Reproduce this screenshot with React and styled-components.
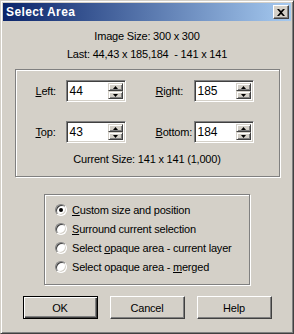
import styled, { createGlobalStyle } from 'styled-components';

const GlobalStyle = createGlobalStyle`
	html, body {
		margin: 0;
		padding: 0;
		background: #d4d0c8;
	}
	* {
		box-sizing: border-box;
	}
`;

const Window = styled.div`
	width: 294px;
	height: 334px;
	padding: 2px;
	display: flex;
	flex-direction: column;
	background: #d4d0c8;
	border: 1px solid;
	border-color: #d4d0c8 #404040 #404040 #d4d0c8;
	box-shadow: inset 1px 1px #fff, inset -1px -1px #808080;
	font-family: "Liberation Sans", Arial, sans-serif;
	font-size: 11px;
	letter-spacing: -0.2px;
	color: #000;
`;

const TitleBar = styled.div`
	height: 18px;
	display: flex;
	align-items: center;
	justify-content: space-between;
	padding: 0 2px 0 3px;
	background: linear-gradient(90deg, #0a246a, #a6caf0);
`;

const Title = styled.span`
	color: #fff;
	font-weight: bold;
	font-size: 12px;
	letter-spacing: 0.4px;
`;

const CloseButton = styled.button`
	width: 16px;
	height: 14px;
	padding: 0;
	display: flex;
	align-items: center;
	justify-content: center;
	background: #d4d0c8;
	border: 1px solid;
	border-color: #fff #404040 #404040 #fff;
	box-shadow: inset -1px -1px #808080;
`;

const Body = styled.div`
	flex: 1;
	display: flex;
	flex-direction: column;
	align-items: center;
	padding-top: 9px;
`;

const InfoLine = styled.div`
	line-height: 13px;
	margin-top: ${p => p.$gap || 0}px;
`;

const GroupBox = styled.div`
	width: ${p => p.$width}px;
	margin-top: ${p => p.$top}px;
	border: 1px solid #808080;
	box-shadow: inset 1px 1px #fff, 1px 1px #fff;
`;

const FieldGrid = styled.div`
	display: grid;
	grid-template-columns: 30px 60px 30px 38px 60px;
	row-gap: 19px;
	align-items: center;
	padding: 10px 0 0 20px;
`;

const Label = styled.label`
	line-height: 13px;
	white-space: nowrap;
`;

const Key = styled.span`
	text-decoration: underline;
	text-underline-offset: 1px;
`;

const SpinBox = styled.div`
	height: 22px;
	display: flex;
	border: 1px solid;
	border-color: #808080 #fff #fff #808080;
	box-shadow: inset 1px 1px #404040, inset -1px -1px #d4d0c8;
	padding: 2px;
	background: #fff;
`;

const SpinText = styled.span`
	flex: 1;
	font-size: 12px;
	line-height: 16px;
	padding-left: 1px;
	letter-spacing: 0;
`;

const SpinButtons = styled.div`
	width: 15px;
	display: flex;
	flex-direction: column;
`;

const SpinHalf = styled.div`
	flex: 1;
	display: flex;
	align-items: center;
	justify-content: center;
	background: #d4d0c8;
	border: 1px solid;
	border-color: #d4d0c8 #404040 #404040 #d4d0c8;
	box-shadow: inset 1px 1px #fff, inset -1px -1px #808080;
`;

const CurrentSize = styled.div`
	text-align: center;
	line-height: 13px;
	margin: 10px 0 10px;
`;

const RadioList = styled.div`
	display: flex;
	flex-direction: column;
	padding: 5px 0 8px 10px;
`;

const RadioRow = styled.div`
	height: 19px;
	display: flex;
	align-items: center;
	gap: 5px;
	white-space: nowrap;
`;

const RadioCircle = styled.span`
	width: 12px;
	height: 12px;
	border-radius: 50%;
	display: flex;
	align-items: center;
	justify-content: center;
	background: #fff;
	border: 1px solid;
	border-color: #808080 #fff #fff #808080;
	box-shadow: inset 1px 1px #404040, inset -1px -1px #d4d0c8;
	&::after {
		content: '';
		width: 4px;
		height: 4px;
		border-radius: 50%;
		background: ${p => (p.$checked ? '#000' : 'transparent')};
	}
`;

const ButtonRow = styled.div`
	display: flex;
	gap: 12px;
	margin-top: 11px;
`;

const Button = styled.button`
	width: 75px;
	height: 23px;
	padding: 0;
	background: #d4d0c8;
	font-family: "Liberation Sans", Arial, sans-serif;
	font-size: 11px;
	letter-spacing: -0.2px;
	color: #000;
	border: 1px solid;
	border-color: ${p => (p.$default ? '#000' : '#fff #404040 #404040 #fff')};
	box-shadow: ${p =>
		p.$default
			? 'inset 1px 1px #fff, inset -1px -1px #404040, inset -2px -2px #808080'
			: 'inset -1px -1px #808080'};
`;

const Arrow = ({ up }) => (
	<svg width="5" height="3" viewBox="0 0 5 3">
		<polygon points={up ? '2.5,0 5,3 0,3' : '0,0 5,0 2.5,3'} fill="#000" />
	</svg>
);

const Spinner = ({ value }) => (
	<SpinBox>
		<SpinText>{value}</SpinText>
		<SpinButtons>
			<SpinHalf><Arrow up /></SpinHalf>
			<SpinHalf><Arrow /></SpinHalf>
		</SpinButtons>
	</SpinBox>
);

const radios = [
	{ pre: '', key: 'C', post: 'ustom size and position', checked: true },
	{ pre: '', key: 'S', post: 'urround current selection' },
	{ pre: 'Select ', key: 'o', post: 'paque area - current layer' },
	{ pre: 'Select opaque area - ', key: 'm', post: 'erged' },
];

export default function App() {
	return (
		<>
			<GlobalStyle />
			<Window>
				<TitleBar>
					<Title>Select Area</Title>
					<CloseButton aria-label="Close">
						<svg width="8" height="7" viewBox="0 0 8 7">
							<path d="M0 0h2l2 2 2-2h2L5 3.5 8 7H6L4 5 2 7H0l3-3.5z" fill="#000" />
						</svg>
					</CloseButton>
				</TitleBar>
				<Body>
					<InfoLine>Image Size: 300 x 300</InfoLine>
					<InfoLine $gap={5}>Last: 44,43 x 185,184&nbsp; - 141 x 141</InfoLine>
					<GroupBox $width={265} $top={8}>
						<FieldGrid>
							<Label><Key>L</Key>eft:</Label>
							<Spinner value="44" />
							<span />
							<Label><Key>R</Key>ight:</Label>
							<Spinner value="185" />
							<Label><Key>T</Key>op:</Label>
							<Spinner value="43" />
							<span />
							<Label><Key>B</Key>ottom:</Label>
							<Spinner value="184" />
						</FieldGrid>
						<CurrentSize>Current Size: 141 x 141 (1,000)</CurrentSize>
					</GroupBox>
					<GroupBox $width={206} $top={17}>
						<RadioList>
							{radios.map(r => (
								<RadioRow key={r.key}>
									<RadioCircle $checked={r.checked} />
									<span>{r.pre}<Key>{r.key}</Key>{r.post}</span>
								</RadioRow>
							))}
						</RadioList>
					</GroupBox>
					<ButtonRow>
						<Button $default>OK</Button>
						<Button>Cancel</Button>
						<Button>Help</Button>
					</ButtonRow>
				</Body>
			</Window>
		</>
	);
}
